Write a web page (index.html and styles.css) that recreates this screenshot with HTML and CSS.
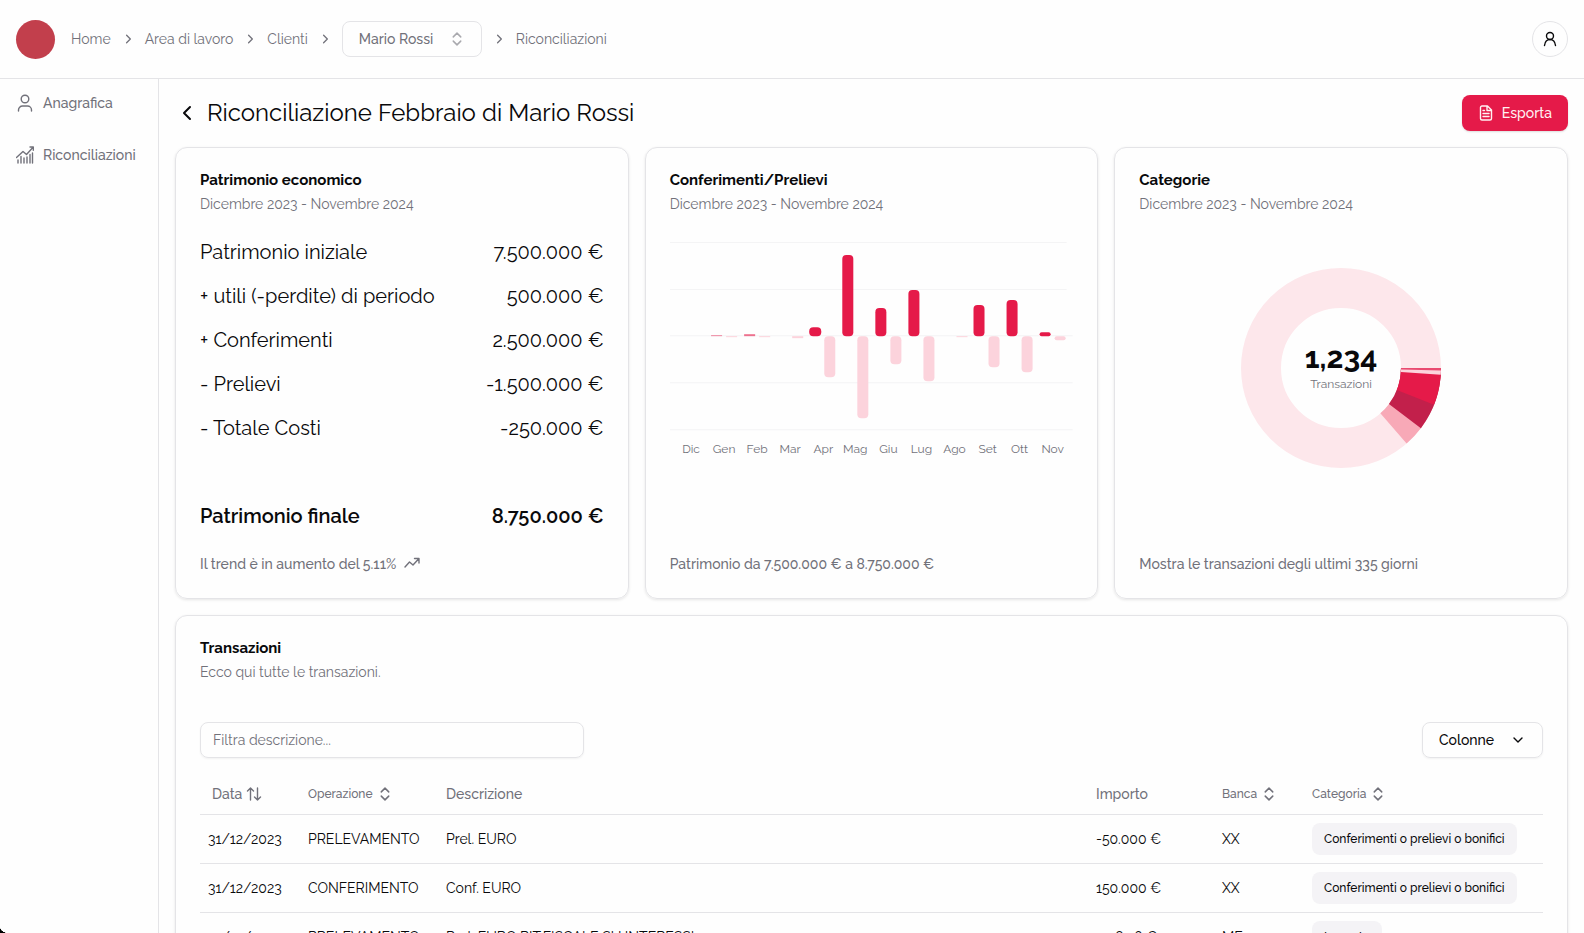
FILE: index.html
```html
<!DOCTYPE html>
<html lang="it">
<head>
<meta charset="utf-8">
<title>Riconciliazione Febbraio di Mario Rossi</title>
<link rel="stylesheet" href="styles.css">
</head>
<body>
<svg class="defs" aria-hidden="true">
  <symbol id="sorter" viewBox="0 0 15 15"><path d="M4 5.500 7.500 2 11 5.500M4 9.500l3.500 3.500L11 9.500"/></symbol>
  <symbol id="chev" viewBox="0 0 15 15"><path d="M6 3.500 10 7.500l-4 4"/></symbol>
</svg>
<header class="topbar">
  <a class="logo" href="#" aria-label="Pagina iniziale"></a>
  <nav class="crumbs" aria-label="Percorso">
    <a href="#">Home</a>
    <svg class="icon i14"><use href="#chev"/></svg>
    <a href="#">Area di lavoro</a>
    <svg class="icon i14"><use href="#chev"/></svg>
    <a href="#">Clienti</a>
    <svg class="icon i14"><use href="#chev"/></svg>
    <button class="switcher" type="button">Mario Rossi <svg class="icon i16 faint"><use href="#sorter"/></svg></button>
    <svg class="icon i14"><use href="#chev"/></svg>
    <a href="#">Riconciliazioni</a>
  </nav>
  <button class="avatar" type="button" aria-label="Profilo">
    <svg class="icon i16" viewBox="0 0 16 16"><circle cx="8" cy="5" r="3.500"/><path d="M2.500 14.500c.5-4 2.500-6 5.500-6s5 2 5.500 6"/></svg>
  </button>
</header>
<div class="shell">
  <aside class="sidebar">
    <a href="#"><svg class="icon i18" viewBox="0 0 18 18"><circle cx="9" cy="5" r="3.800"/><path d="M2.500 17v-1a4 4 0 0 1 4-4h5a4 4 0 0 1 4 4v1"/></svg>Anagrafica</a>
    <a href="#"><svg class="icon i18" viewBox="0 0 18 18"><path d="M.5 11.500 7 5.500l3.500 3L17.300 1M14 1h3.300v3.300M2 17v-3M5 17v-6.500M8 17v-5M11 17v-6M14 17V8.500M16.500 17V7"/></svg>Riconciliazioni</a>
  </aside>
  <main class="main">
    <div class="titlebar">
      <a class="back" href="#" aria-label="Indietro"><svg class="icon i24" viewBox="0 0 24 24"><path d="m15 6-6 6 6 6"/></svg></a>
      <h1>Riconciliazione Febbraio di Mario Rossi</h1>
      <button class="export" type="button"><svg class="icon i16" viewBox="0 0 16 16"><path d="M9.500 1H4a1.500 1.500 0 0 0-1.500 1.500v11A1.500 1.500 0 0 0 4 15h8a1.500 1.500 0 0 0 1.500-1.500V5zM9 1v4.500h4.500M5 5.500h1.500M5 8.500h6M5 11.500h6"/></svg>Esporta</button>
    </div>
    <div class="cards">
      <section class="card">
        <h2>Patrimonio economico</h2>
        <p class="sub">Dicembre 2023 - Novembre 2024</p>
        <dl class="sums">
          <div><dt>Patrimonio iniziale</dt><dd>7.500.000 €</dd></div>
          <div><dt>+ utili (-perdite) di periodo</dt><dd>500.000 €</dd></div>
          <div><dt>+ Conferimenti</dt><dd>2.500.000 €</dd></div>
          <div><dt>- Prelievi</dt><dd>-1.500.000 €</dd></div>
          <div><dt>- Totale Costi</dt><dd>-250.000 €</dd></div>
          <div class="total"><dt>Patrimonio finale</dt><dd>8.750.000 €</dd></div>
        </dl>
        <p class="foot">Il trend è in aumento del 5.11% <svg class="icon i16" viewBox="0 0 16 16"><path d="M1 11 5.500 6 9 9l6-6.500M10.500 2.500H15V7"/></svg></p>
      </section>
      <section class="card">
        <h2>Conferimenti/Prelievi</h2>
        <p class="sub">Dicembre 2023 - Novembre 2024</p>
        <svg class="bars" viewBox="0 0 403 226" role="img" aria-label="Conferimenti e prelievi per mese">
          <path class="grid" d="M0 6.500h396M0 53.500h396M0 99.500h402M0 146.500h402M0 193.500h402"/>
          <g class="in">
            <rect x="41" y="99" width="11" height="1" opacity=".5"/><rect x="74" y="98" width="11" height="2" opacity=".6"/>
            <rect x="139" y="91" width="12" height="9" rx="4"/><rect x="172" y="19" width="11" height="81" rx="4"/><rect x="205" y="72" width="11" height="28" rx="4"/><rect x="238" y="54" width="11" height="46" rx="4"/><rect x="303" y="69" width="11" height="31" rx="4"/><rect x="336" y="64" width="11" height="36" rx="4"/><rect x="369" y="96" width="11" height="4" rx="2"/>
          </g>
          <g class="out">
            <rect x="56" y="100" width="11" height="1"/><rect x="89" y="100" width="11" height="1"/><rect x="122" y="100" width="11" height="2"/><rect x="154" y="100" width="11" height="41" rx="4"/><rect x="187" y="100" width="11" height="82" rx="4"/><rect x="220" y="100" width="11" height="28" rx="4"/><rect x="253" y="100" width="11" height="45" rx="4"/><rect x="286" y="100" width="11" height="1"/><rect x="318" y="100" width="11" height="31" rx="4"/><rect x="351" y="100" width="11" height="36" rx="4"/><rect x="384" y="100" width="11" height="4" rx="2"/>
          </g>
          <g class="months"><text x="21" y="217">Dic</text><text x="54" y="217">Gen</text><text x="87" y="217">Feb</text><text x="120" y="217">Mar</text><text x="153" y="217">Apr</text><text x="185" y="217">Mag</text><text x="218" y="217">Giu</text><text x="251" y="217">Lug</text><text x="284" y="217">Ago</text><text x="317" y="217">Set</text><text x="349" y="217">Ott</text><text x="382" y="217">Nov</text></g>
        </svg>
        <p class="foot">Patrimonio da 7.500.000 € a 8.750.000 €</p>
      </section>
      <section class="card">
        <h2>Categorie</h2>
        <p class="sub">Dicembre 2023 - Novembre 2024</p>
        <svg class="donut" viewBox="0 0 200 200" role="img" aria-label="Transazioni per categoria">
          <g fill="none" stroke-width="40">
            <circle cx="100" cy="100" r="80" stroke="#fde7eb"/>
            <circle cx="100" cy="100" r="80" pathLength="360" stroke="#f8a9b7" stroke-dasharray="49 311"/>
            <circle cx="100" cy="100" r="80" pathLength="360" stroke="#c2204b" stroke-dasharray="37 323"/>
            <circle cx="100" cy="100" r="80" pathLength="360" stroke="#e51a49" stroke-dasharray="21.500 338.500"/>
            <circle cx="100" cy="100" r="80" pathLength="360" stroke="#fcd3dc" stroke-dasharray="4 356"/>
            <circle cx="100" cy="100" r="80" pathLength="360" stroke="#e94a70" stroke-dasharray="1.500 358.500"/>
          </g>
          <text class="count" x="100" y="100">1,234</text>
          <text class="unit" x="100" y="120">Transazioni</text>
        </svg>
        <p class="foot">Mostra le transazioni degli ultimi 335 giorni</p>
      </section>
    </div>
    <section class="card ledger">
      <h2>Transazioni</h2>
      <p class="sub">Ecco qui tutte le transazioni.</p>
      <div class="tools">
        <input type="text" placeholder="Filtra descrizione..." aria-label="Filtra descrizione">
        <button class="cols" type="button">Colonne <svg class="icon i16" viewBox="0 0 16 16"><path d="m4 6 4 4 4-4"/></svg></button>
      </div>
      <table>
        <colgroup><col class="c-date"><col class="c-op"><col class="c-desc"><col class="c-amt"><col class="c-bank"><col class="c-cat"></colgroup>
        <thead><tr>
          <th><button class="sort wide" type="button">Data <svg class="icon i16" viewBox="0 0 16 16"><path d="M4.500 14V2M1.500 5l3-3 3 3M11.500 2v12M8.500 11l3 3 3-3"/></svg></button></th>
          <th><button class="sort" type="button">Operazione <svg class="icon i16"><use href="#sorter"/></svg></button></th>
          <th>Descrizione</th><th>Importo</th>
          <th><button class="sort" type="button">Banca <svg class="icon i16"><use href="#sorter"/></svg></button></th>
          <th><button class="sort" type="button">Categoria <svg class="icon i16"><use href="#sorter"/></svg></button></th>
        </tr></thead>
        <tbody>
          <tr><td>31/12/2023</td><td>PRELEVAMENTO</td><td>Prel. EURO</td><td>-50.000 €</td><td>XX</td><td><span class="tag">Conferimenti o prelievi o bonifici</span></td></tr>
          <tr><td>31/12/2023</td><td>CONFERIMENTO</td><td>Conf. EURO</td><td>150.000 €</td><td>XX</td><td><span class="tag">Conferimenti o prelievi o bonifici</span></td></tr>
          <tr><td>31/12/2023</td><td>PRELEVAMENTO</td><td>Prel. EURO RIT.FISCALE SU INTERESSI</td><td>-138,26 €</td><td>MF</td><td><span class="tag">Imposte</span></td></tr>
        </tbody>
      </table>
    </section>
  </main>
</div>
<div class="corner"></div>
</body>
</html>
```
FILE: styles.css
```css
* { box-sizing: border-box; }
html, body { height: 100%; }
body { margin: 0; display: flex; flex-direction: column; overflow: hidden; background: #fefefe; color: #09090b; font: 14px/20px Raleway, Lato, sans-serif; }
h1, h2, p, dl, dd { margin: 0; }
a { color: inherit; text-decoration: none; }
button { font: inherit; color: inherit; background: none; border: 0; padding: 0; cursor: pointer; }
.defs { display: none; }
.icon { fill: none; stroke: currentColor; stroke-width: 1.4; flex: none; stroke-linecap: round; stroke-linejoin: round; }
.i14 { width: 14px; height: 14px; }
.i16 { width: 16px; height: 16px; }
.i18 { width: 18px; height: 18px; }
.i24 { width: 24px; height: 24px; stroke-width: 2; }
.faint { opacity: .6; }

.topbar { display: flex; align-items: center; gap: 16px; flex: none; height: 79px; padding: 0 16px; border-bottom: 1px solid #e4e4e7; }
.logo { width: 39px; height: 39px; border-radius: 50%; background: #c23f4c; }
.crumbs { display: flex; align-items: center; gap: 10px; color: #71717a; }
.switcher { display: flex; align-items: center; justify-content: space-between; width: 140px; height: 36px; padding: 0 16px; border: 1px solid #e4e4e7; border-radius: 8px; font-weight: 500; }
.avatar { display: grid; place-items: center; width: 36px; height: 36px; margin-left: auto; border: 1px solid #e4e4e7; border-radius: 50%; }

.shell { display: flex; flex: 1; min-height: 0; }
.sidebar { display: flex; flex-direction: column; gap: 32px; width: 159px; flex: none; padding: 14px 16px; border-right: 1px solid #e4e4e7; color: #71717a; font-weight: 500; }
.sidebar a { display: flex; align-items: center; gap: 9px; }
.main { flex: 1; min-width: 0; padding: 16px; }
.titlebar { display: flex; align-items: center; height: 36px; gap: 8px; margin-bottom: 16px; }
.back { display: flex; }
h1 { font-size: 24px; line-height: 32px; font-weight: 400; }
.export { display: flex; align-items: center; justify-content: center; gap: 8px; height: 36px; margin-left: auto; padding: 0 16px; border-radius: 8px; background: #e51a49; color: #fff1f2; font-weight: 500; box-shadow: 0 1px 2px #0002; }

.cards { display: grid; grid-template-columns: repeat(3, 1fr); gap: 16px; margin-bottom: 16px; }
.card { display: flex; flex-direction: column; padding: 24px; border: 1px solid #e4e4e7; border-radius: 12px; box-shadow: 0 1px 3px #0000001a; }
h2 { font-size: 15px; line-height: 16px; font-weight: 700; }
.sub { margin-top: 6px; color: #71717a; }
.sums { display: flex; flex-direction: column; gap: 16px; margin: 24px 0; font-size: 20px; line-height: 28px; }
.sums div { display: flex; justify-content: space-between; }
.sums .total { margin-top: 44px; font-weight: 600; }
.foot { display: flex; align-items: center; gap: 8px; height: 20px; margin-top: auto; margin-bottom: 0; color: #71717a; font-weight: 500; }
.bars { width: 100%; margin-top: 22px; }
.grid { stroke: #f4f4f5; fill: none; }
.in { fill: #e51a49; }
.out { fill: #fcd3dc; }
.months { fill: #71717a; font-size: 12px; text-anchor: middle; }
.donut { width: 200px; margin: 54px auto 0; }
.donut text { text-anchor: middle; fill: #09090b; }
.donut .count { font-size: 30px; font-weight: 700; }
.donut .unit { font-size: 12px; fill: #71717a; }

.tools { display: flex; justify-content: space-between; margin: 40px 0 16px; }
.tools input { width: 384px; height: 36px; padding: 0 12px; border: 1px solid #e4e4e7; border-radius: 8px; background: none; font: inherit; box-shadow: 0 1px 2px #0000000d; }
.tools input::placeholder { color: #71717a; opacity: 1; }
.cols { display: flex; align-items: center; justify-content: space-between; width: 121px; height: 36px; padding: 0 16px; border: 1px solid #e4e4e7; border-radius: 8px; font-weight: 500; box-shadow: 0 1px 2px #0000000d; }
table { width: 100%; border-collapse: collapse; table-layout: fixed; }
.c-date { width: 100px; }
.c-op { width: 138px; }
.c-amt { width: 126px; }
.c-bank { width: 90px; }
.c-cat { width: 239px; }
th, td { padding: 0 8px; text-align: left; white-space: nowrap; border-bottom: 1px solid #e4e4e7; }
th { height: 40px; color: #71717a; font-weight: 500; }
td { height: 49px; }
.sort { display: flex; align-items: center; gap: 4px; font-size: 12px; font-weight: 500; }
.sort.wide { padding-left: 4px; font-size: 14px; }
.tag { display: inline-block; padding: 6px 12px; border-radius: 8px; background: #f4f3f6; font-size: 12px; font-weight: 500; }
.corner { position: fixed; left: 0; bottom: 0; width: 8px; height: 6px; background: radial-gradient(ellipse at top right, transparent 68%, #000 72%); }
```
